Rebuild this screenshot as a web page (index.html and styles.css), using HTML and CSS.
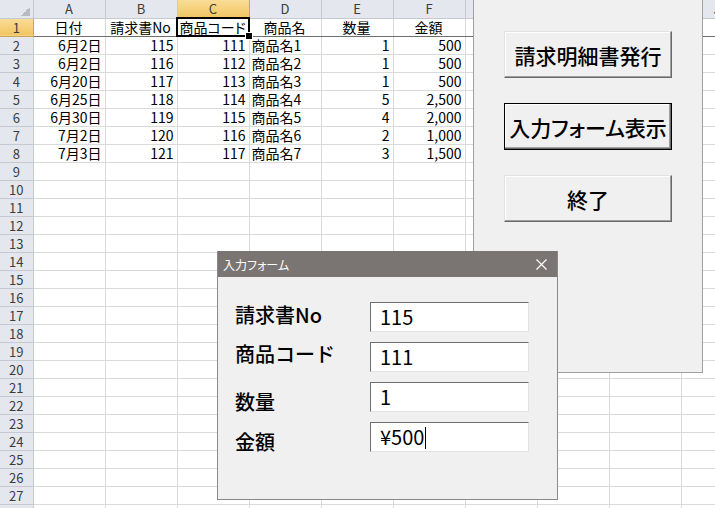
FILE: index.html
```html
<!doctype html>
<html lang="ja">
<head>
	<meta charset="UTF-8" />
	<title>請求明細</title>
	<link rel="stylesheet" href="styles.css">
</head>
<body>
    <div id="book">
        <table id="sheet">
            <colgroup>
                <col class="col_rh">
                <col class="col_cell" span="10">
            </colgroup>
            <thead>
                <tr>
                    <th class="corner"></th>
                    <th>A</th><th>B</th><th class="on">C</th><th>D</th><th>E</th>
                    <th>F</th><th>G</th><th>H</th><th>I</th><th>J</th>
                </tr>
            </thead>
            <tbody id="rows">
            </tbody>
        </table>

        <div id="panel">
            <button class="btn">請求明細書発行</button>
            <button class="btn default">入力フォーム表示</button>
            <button class="btn">終了</button>
        </div>

        <div id="form">
            <div class="form_title">
                <span>入力フォーム</span>
                <svg width="11" height="11" viewBox="0 0 11 11"><path d="M0.5 0.5 L10.5 10.5 M10.5 0.5 L0.5 10.5" stroke="#fff" stroke-width="1.2" fill="none"/></svg>
            </div>
            <div class="form_body">
                <div class="form_row"><span class="label l1">請求書No</span><div class="field">115</div></div>
                <div class="form_row"><span class="label l2">商品コード</span><div class="field">111</div></div>
                <div class="form_row"><span class="label l3">数量</span><div class="field">1</div></div>
                <div class="form_row"><span class="label l4">金額</span><div class="field">¥500<span class="caret"></span></div></div>
            </div>
        </div>
    </div>
	<script>
        const data = [
            ["日付", "請求書No", "商品コード", "商品名", "数量", "金額"],
            ["6月2日", "115", "111", "商品名1", "1", "500"],
            ["6月2日", "116", "112", "商品名2", "1", "500"],
            ["6月20日", "117", "113", "商品名3", "1", "500"],
            ["6月25日", "118", "114", "商品名4", "5", "2,500"],
            ["6月30日", "119", "115", "商品名5", "4", "2,000"],
            ["7月2日", "120", "116", "商品名6", "2", "1,000"],
            ["7月3日", "121", "117", "商品名7", "3", "1,500"]
        ];
        const align = ["r", "r", "r", "l", "r", "r"];

        let items = "";
        for (let r = 1; r <= 28; r++) {
            const row = data[r - 1] || [];
            items += "<tr class='" + (r == 1 ? "r1" : "") + "'>";
            items += "<td class='rh" + (r == 1 ? " on" : "") + "'>" + r + "</td>";
            for (let c = 0; c < 10; c++) {
                const val = row[c] || "";
                let cls = r == 1 ? "c" : (align[c] || "");
                if (r == 1 && c == 2) cls += " sel";
                items += "<td class='" + cls + "'>" + val + "</td>";
            }
            items += "</tr>";
        }
        document.querySelector("#rows").innerHTML = items;
	</script>
</body>
</html>
```

FILE: styles.css
```css
* { margin: 0; padding: 0; box-sizing: border-box; }
html, body { width: 715px; height: 508px; overflow: hidden; background: #fff; }
body { font-family: "Noto Sans CJK JP", sans-serif; color: #000; }

#book { position: relative; width: 715px; height: 508px; overflow: hidden; }

/* sheet */
#sheet { width: 753px; border-collapse: collapse; table-layout: fixed; font-size: 14px; }
.col_rh { width: 33px; }
.col_cell { width: 72px; }
#sheet th { height: 15px; padding: 0; font-size: 13px; font-weight: normal; line-height: 13px; color: #3c3c3c; background: #e4e8ee; border: 1px solid #c5cad1; border-top: 0; }
#sheet th.corner { border-left: 0; background: linear-gradient(to top left, #b7bbc1 50%, transparent 50%) right 3px bottom 2px / 9px 9px no-repeat, #e4e8ee; }
#sheet th.on, #sheet td.rh.on { background: linear-gradient(#f9dc97, #f2c462); border-color: #c9a55a; }
#sheet tr { height: 18px; }
#sheet td { padding: 0 3px 0 2px; line-height: 17px; white-space: nowrap; overflow: hidden; border: 1px solid #dadada; }
#sheet td.rh { padding: 0; font-size: 13px; text-align: center; color: #3c3c3c; background: #e4e8ee; border-color: #c5cad1; border-left: 0; }
#sheet td.r { text-align: right; }
#sheet td.l { text-align: left; }
#sheet td.c { text-align: center; }
#sheet tr.r1 td { border-bottom: 1px solid #6e6e6e; }
#sheet td.sel { position: relative; overflow: visible; outline: 2px solid #000; outline-offset: -1px; font-feature-settings: "palt"; }
#sheet td.sel::after { content: ""; position: absolute; right: -4px; bottom: -4px; width: 6px; height: 6px; background: #000; border: 1px solid #fff; }

/* button panel */
#panel { position: absolute; left: 473px; top: 0; width: 230px; height: 373px; display: flex; flex-direction: column; align-items: center; gap: 25px; padding-top: 31px; background: #f0f0f0; border: 1px solid #a0a0a0; border-top: 0; }
.btn { width: 168px; height: 47px; font-family: "Noto Sans CJK JP", sans-serif; font-size: 21px; font-weight: 500; color: #000; background: #f0f0f0; border: 1px solid; border-color: #e2e2e2 #696969 #696969 #e2e2e2; box-shadow: inset -1px -1px #a0a0a0, inset 1px 1px #fff; font-feature-settings: "palt"; }
.btn.default { border: 1px solid #000; box-shadow: inset -1px -1px #696969, inset -2px -2px #a0a0a0, inset 1px 1px #fff; }

/* input form */
#form { position: absolute; left: 217px; top: 251px; width: 341px; height: 249px; background: #f0f0f0; border: 1px solid #8a8a8a; border-top: 0; }
.form_title { height: 26px; display: flex; align-items: center; justify-content: space-between; padding: 0 10px 0 5px; font-size: 12px; color: #fff; background: #7a7573; font-feature-settings: "palt"; }
.form_body { display: flex; flex-direction: column; gap: 10px; padding: 25px 0 0 17px; }
.form_row { display: flex; align-items: center; height: 30px; }
.label { width: 135px; font-size: 20px; font-weight: 500; line-height: 22px; }
.label.l1 { margin-top: -4px; }
.label.l2 { margin-top: -6px; }
.label.l3 { margin-top: 10px; }
.label.l4 { margin-top: 10px; }
.field { width: 159px; height: 30px; padding-left: 9px; font-size: 20px; line-height: 28px; background: #fff; border: 1px solid; border-color: #6e6e6e #e3e3e3 #e3e3e3 #6e6e6e; }
.caret { display: inline-block; width: 1px; height: 22px; margin-left: 1px; vertical-align: -4px; background: #000; }
```
